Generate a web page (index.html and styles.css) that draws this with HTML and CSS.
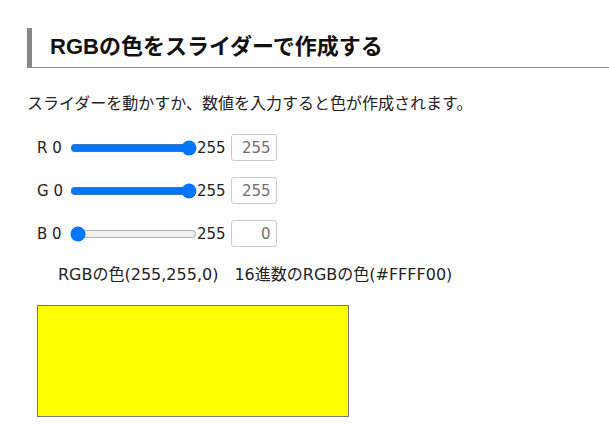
FILE: index.html
```html
<!DOCTYPE html>
<html lang="ja">
<head>
    <meta charset="UTF-8">
    <title>RGBの色をスライダーで作成する</title>
    <link rel="stylesheet" href="styles.css">
</head>
<body>
    <div class="contenido">
        <h2 class="titulo">RGBの色をスライダーで作成する</h2>
        <p class="descripcion">スライダーを動かすか、数値を入力すると色が作成されます。</p>

        <div class="fila">
            <span class="etiqueta">R 0</span>
            <input type="range" class="deslizador" min="0" max="255" value="255">
            <span class="maximo">255</span>
            <input type="text" class="numero" value="255">
        </div>
        <div class="fila">
            <span class="etiqueta">G 0</span>
            <input type="range" class="deslizador" min="0" max="255" value="255">
            <span class="maximo">255</span>
            <input type="text" class="numero" value="255">
        </div>
        <div class="fila">
            <span class="etiqueta">B 0</span>
            <input type="range" class="deslizador" min="0" max="255" value="0">
            <span class="maximo">255</span>
            <input type="text" class="numero" value="0">
        </div>

        <div class="resultado">RGBの色(255,255,0)　16進数のRGBの色(#FFFF00)</div>
        <div class="muestra"></div>
    </div>
</body>
</html>
```

FILE: styles.css
```css
body {
    margin: 0;
    background: #fff;
    color: #222;
    font-family: "DejaVu Sans", "Noto Sans CJK JP", sans-serif;
}

.contenido {
    padding: 28px 0 0 27px;
}

/* Título con barra a la izquierda */
.titulo {
    margin: 0;
    height: 39px;
    line-height: 37px;
    padding-left: 18px;
    border-left: 5px solid #888;
    border-bottom: 1px solid #888;
    font-family: "Liberation Sans", "Noto Sans CJK JP", sans-serif;
    font-size: 22px;
    font-weight: bold;
    color: #111;
}

.descripcion {
    margin: 24px 0 0 0;
    font-size: 16px;
    line-height: 24px;
}

.fila {
    display: flex;
    align-items: center;
    height: 43px;
    padding-left: 10px;
    font-size: 15px;
}
.fila:first-of-type {
    margin-top: 10px;
}

.etiqueta {
    width: 31px;
}

.deslizador {
    width: 127px;
    margin: 0 0 0 2px;
    accent-color: #0075ff;
}

.numero {
    width: 46px;
    height: 27px;
    box-sizing: border-box;
    margin-left: 5px;
    padding: 0 5px;
    border: 1px solid #ccc;
    border-radius: 3px;
    text-align: right;
    font-family: inherit;
    font-size: 15px;
    color: #707070;
}

.resultado {
    margin-top: 8px;
    padding-left: 31px;
    font-size: 16px;
    line-height: 24px;
}

.muestra {
    width: 310px;
    height: 110px;
    margin: 18px 0 0 10px;
    background: #ffff00;
    border: 1px solid #777;
}
```
